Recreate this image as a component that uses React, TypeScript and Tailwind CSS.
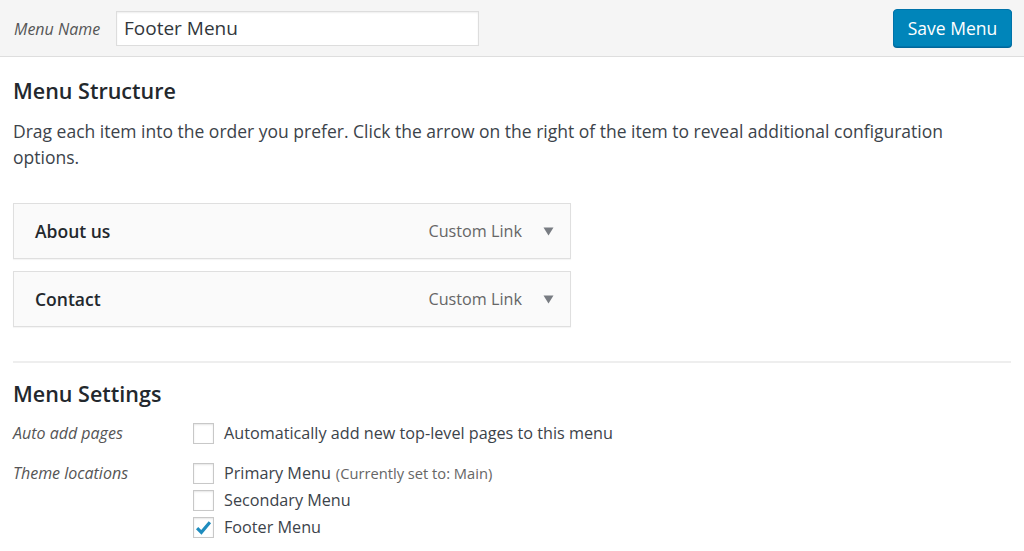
import React from 'react'

const FONT = { fontFamily: '"Open Sans", "Noto Sans", sans-serif' }

const ITEMS = [
  { title: 'About us', type: 'Custom Link' },
  { title: 'Contact', type: 'Custom Link' },
]

const LOCATIONS = [
  { label: 'Primary Menu', note: '(Currently set to: Main)', checked: false },
  { label: 'Secondary Menu', note: null, checked: false },
  { label: 'Footer Menu', note: null, checked: true },
]

const Checkbox: React.FC<{ checked?: boolean }> = ({ checked }) => (
  <span className="w-[21px] h-[21px] shrink-0 bg-white border border-[#c8c8c8] shadow-[inset_0_1px_2px_rgba(0,0,0,0.1)] flex items-center justify-center">
    {checked && (
      <svg width="17" height="15" viewBox="0 0 16 14">
        <path d="M2 7.5 L6 11.5 L14 2" fill="none" stroke="#1e8cbe" strokeWidth="3" strokeLinecap="butt" />
      </svg>
    )}
  </span>
)

const App: React.FC = () => {
  return (
    <div className="w-[1024px] h-[551px] bg-white overflow-hidden text-[#444]" style={FONT}>
      {/* Header */}
      <div className="h-[57px] bg-[#f5f5f5] border-b border-[#dedede] flex items-center pl-[14px] pr-[12px] pt-[1px]">
        <span className="italic text-[16px] text-[#555] w-[102px]">Menu Name</span>
        <div className="w-[363px] h-[35px] bg-white border border-[#ddd] shadow-[inset_0_1px_2px_rgba(0,0,0,0.07)] flex items-center pl-[7px] text-[19px] text-[#32373c]">
          Footer Menu
        </div>
        <button className="ml-auto -mt-[1px] w-[119px] h-[38px] rounded-[4px] bg-[#0085ba] border border-[#0073aa] shadow-[0_1px_0_#006799] text-white text-[17.5px]">
          Save Menu
        </button>
      </div>

      <div className="px-[13px]">
        {/* Menu Structure */}
        <h2 className="mt-[20px] text-[21.5px] leading-[28px] font-semibold text-[#23282d]">Menu Structure</h2>
        <p className="mt-[13px] text-[17.5px] leading-[26px] pr-[50px] text-[#3c434a]">
          Drag each item into the order you prefer. Click the arrow on the right of the item to reveal additional configuration options.
        </p>

        <div className="mt-[33px] flex flex-col gap-[12px] w-[558px]">
          {ITEMS.map(it => (
            <div key={it.title} className="h-[56px] bg-[#fafafa] border border-[#dfdfdf] shadow-[0_1px_1px_rgba(0,0,0,0.04)] flex items-center pl-[21px] pr-[16px]">
              <span className="text-[17.5px] font-semibold text-[#23282d]">{it.title}</span>
              <span className="ml-auto text-[16.2px] text-[#666]">{it.type}</span>
              <svg className="ml-[21px]" width="11" height="9" viewBox="0 0 11 9">
                <path d="M0.5 0.5 H10.5 L5.5 8.5 Z" fill="#787c82" />
              </svg>
            </div>
          ))}
        </div>

        <div className="mt-[34px] h-[2px] bg-[#eeeeee]" />

        {/* Menu Settings */}
        <h2 className="mt-[17px] text-[21.5px] leading-[28px] font-semibold text-[#23282d]">Menu Settings</h2>

        <div className="mt-[13px] flex items-center">
          <span className="w-[180px] italic text-[16px] text-[#555]">Auto add pages</span>
          <label className="flex items-center gap-[10px] text-[16.2px] text-[#3c434a]">
            <Checkbox />
            Automatically add new top-level pages to this menu
          </label>
        </div>

        <div className="mt-[18px] flex items-start">
          <span className="w-[180px] italic text-[16px] text-[#555] leading-[21px]">Theme locations</span>
          <div className="flex flex-col gap-[6px]">
            {LOCATIONS.map(l => (
              <label key={l.label} className="flex items-center gap-[10px] text-[16.2px] text-[#3c434a] leading-[21px]">
                <Checkbox checked={l.checked} />
                <span>
                  {l.label}
                  {l.note && <span className="ml-[5px] text-[14.7px] text-[#666]">{l.note}</span>}
                </span>
              </label>
            ))}
          </div>
        </div>
      </div>
    </div>
  )
}

export default App
